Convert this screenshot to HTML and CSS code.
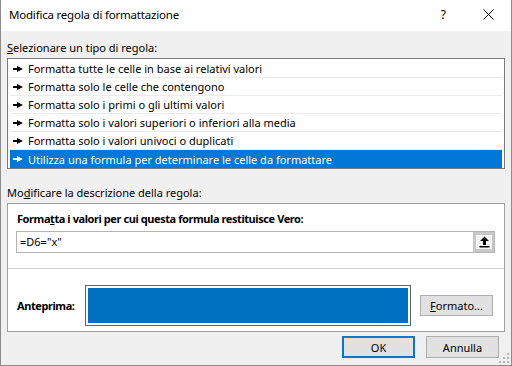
FILE: index.html
```html
<!DOCTYPE html>
<html lang="it">
<head>
    <meta charset="UTF-8">
    <title>Modifica regola di formattazione</title>
    <link rel="stylesheet" href="styles.css">
</head>
<body>
    <div class="window">
        <div class="titlebar">
            <span class="title">Modifica regola di formattazione</span>
            <span class="help">?</span>
            <svg class="close" width="11" height="11" viewBox="0 0 11 11">
                <path d="M0.5 0.5L10.5 10.5M10.5 0.5L0.5 10.5" stroke="#000" stroke-width="1"/>
            </svg>
        </div>

        <div class="content">
            <div class="label"><u>S</u>elezionare un tipo di regola:</div>
            <ul class="rule-list">
                <li class="rule"><span class="arrow"></span>Formatta tutte le celle in base ai relativi valori</li>
                <li class="rule"><span class="arrow"></span>Formatta solo le celle che contengono</li>
                <li class="rule"><span class="arrow"></span>Formatta solo i primi o gli ultimi valori</li>
                <li class="rule"><span class="arrow"></span>Formatta solo i valori superiori o inferiori alla media</li>
                <li class="rule"><span class="arrow"></span>Formatta solo i valori univoci o duplicati</li>
                <li class="rule selected"><span class="arrow"></span>Utilizza una formula per determinare le celle da formattare</li>
            </ul>

            <div class="label label-desc">Mo<u>d</u>ificare la descrizione della regola:</div>
            <div class="desc-panel">
                <div class="desc-top">
                    <div class="bold">Forma<u>t</u>ta i valori per cui questa formula restituisce Vero:</div>
                    <div class="formula">
                        <span class="formula-text">=D6="x"</span>
                        <span class="ref-btn">
                            <svg width="11" height="12" viewBox="0 0 11 12">
                                <path d="M5.5 0.5L10 5H7V9H4V5H1Z" fill="#000"/>
                                <rect x="0.5" y="10" width="10" height="1.5" fill="#000"/>
                            </svg>
                        </span>
                    </div>
                </div>
                <div class="preview-row">
                    <span class="bold preview-label">Anteprima:</span>
                    <div class="preview-box"><div class="preview-fill"></div></div>
                    <button class="btn"><u>F</u>ormato...</button>
                </div>
            </div>

            <div class="actions">
                <button class="btn btn-ok">OK</button>
                <button class="btn">Annulla</button>
            </div>
        </div>

        <svg class="grip" width="10" height="10" viewBox="0 0 10 10">
            <rect x="8" y="0" width="2" height="2" fill="#b4b4b4"/>
            <rect x="4" y="4" width="2" height="2" fill="#b4b4b4"/>
            <rect x="8" y="4" width="2" height="2" fill="#b4b4b4"/>
            <rect x="0" y="8" width="2" height="2" fill="#b4b4b4"/>
            <rect x="4" y="8" width="2" height="2" fill="#b4b4b4"/>
            <rect x="8" y="8" width="2" height="2" fill="#b4b4b4"/>
        </svg>
    </div>
</body>
</html>
```

FILE: styles.css
```css
:root {
    --face: #f0f0f0;
    --select: #0078d7;
    --preview: #0070c0;
    --btn-face: #e1e1e1;
    --btn-border: #adadad;
}

* {
    margin: 0;
    padding: 0;
    box-sizing: border-box;
}

body {
    font-family: 'Segoe UI', 'Noto Sans', sans-serif;
    font-size: 11px;
    line-height: 16px;
    color: #000;
    background: var(--face);
}

.window {
    position: relative;
    width: 512px;
    height: 366px;
    border: 1px solid #8c8c8c;
    border-top: none;
    background: var(--face);
    overflow: hidden;
}

.titlebar {
    height: 31px;
    background: #fff;
    display: flex;
    align-items: center;
    padding-left: 8px;
}

.title {
    flex: 1;
    padding-bottom: 2px;
    font-size: 11.5px;
    letter-spacing: -0.2px;
}

.help {
    margin-right: 37px;
    padding-bottom: 2px;
    font-size: 12px;
}

.close {
    margin-right: 17px;
    margin-bottom: 2px;
}

.content {
    padding: 9px 6px 0;
}

.label {
    height: 16px;
    margin-bottom: 2px;
}

.label-desc {
    margin-top: 16px;
}

/* list of rule types */
.rule-list {
    list-style: none;
    background: #fff;
    border: 1px solid #7a7a7a;
    padding: 1px 2px 0;
}

.rule {
    height: 18px;
    line-height: 17px;
    border-bottom: 1px solid #ececec;
    padding-left: 3px;
    display: flex;
    align-items: center;
    white-space: nowrap;
}

.rule.selected {
    background: var(--select);
    color: #fff;
    border-bottom: none;
}

.arrow {
    width: 10px;
    height: 6px;
    margin-right: 5px;
    position: relative;
}

.arrow::before {
    content: "";
    position: absolute;
    left: 0;
    top: 2px;
    width: 5px;
    height: 2px;
    background: currentColor;
}

.arrow::after {
    content: "";
    position: absolute;
    left: 4px;
    top: 0;
    border-left: 6px solid currentColor;
    border-top: 3px solid transparent;
    border-bottom: 3px solid transparent;
}

/* rule description */
.desc-panel {
    background: #fff;
    border: 1px solid #a0a0a0;
    height: 129px;
}

.desc-top {
    padding: 7px 9px 15px 8px;
    border-bottom: 1px solid #cfcfcf;
}

.bold {
    font-weight: 700;
    letter-spacing: -0.42px;
    padding-left: 1px;
}

.formula {
    margin-top: 4px;
    height: 22px;
    border: 1px solid #b4b4b4;
    display: flex;
    align-items: stretch;
}

.formula-text {
    flex: 1;
    padding-left: 3px;
    line-height: 19px;
}

.ref-btn {
    width: 21px;
    border: 3px solid #c8c8c8;
    border-right-width: 2px;
    background: #f4f4f4;
    display: flex;
    align-items: center;
    justify-content: center;
}

.preview-row {
    display: flex;
    align-items: center;
    padding: 16px 10px 0 8px;
}

.preview-label {
    width: 69px;
}

.preview-box {
    width: 326px;
    height: 41px;
    border: 1px solid #646464;
    padding: 2px;
    margin-right: 9px;
}

.preview-fill {
    height: 100%;
    background: var(--preview);
}

.btn {
    font-family: inherit;
    font-size: 11px;
    width: 73px;
    height: 21px;
    background: var(--btn-face);
    border: 1px solid var(--btn-border);
    color: #000;
}

.actions {
    display: flex;
    justify-content: flex-end;
    gap: 11px;
    padding-right: 6px;
    margin-top: 4px;
}

.actions .btn {
    height: 22px;
}

.btn-ok {
    border: 2px solid var(--select);
}

.grip {
    position: absolute;
    right: 2px;
    bottom: 2px;
}
```
